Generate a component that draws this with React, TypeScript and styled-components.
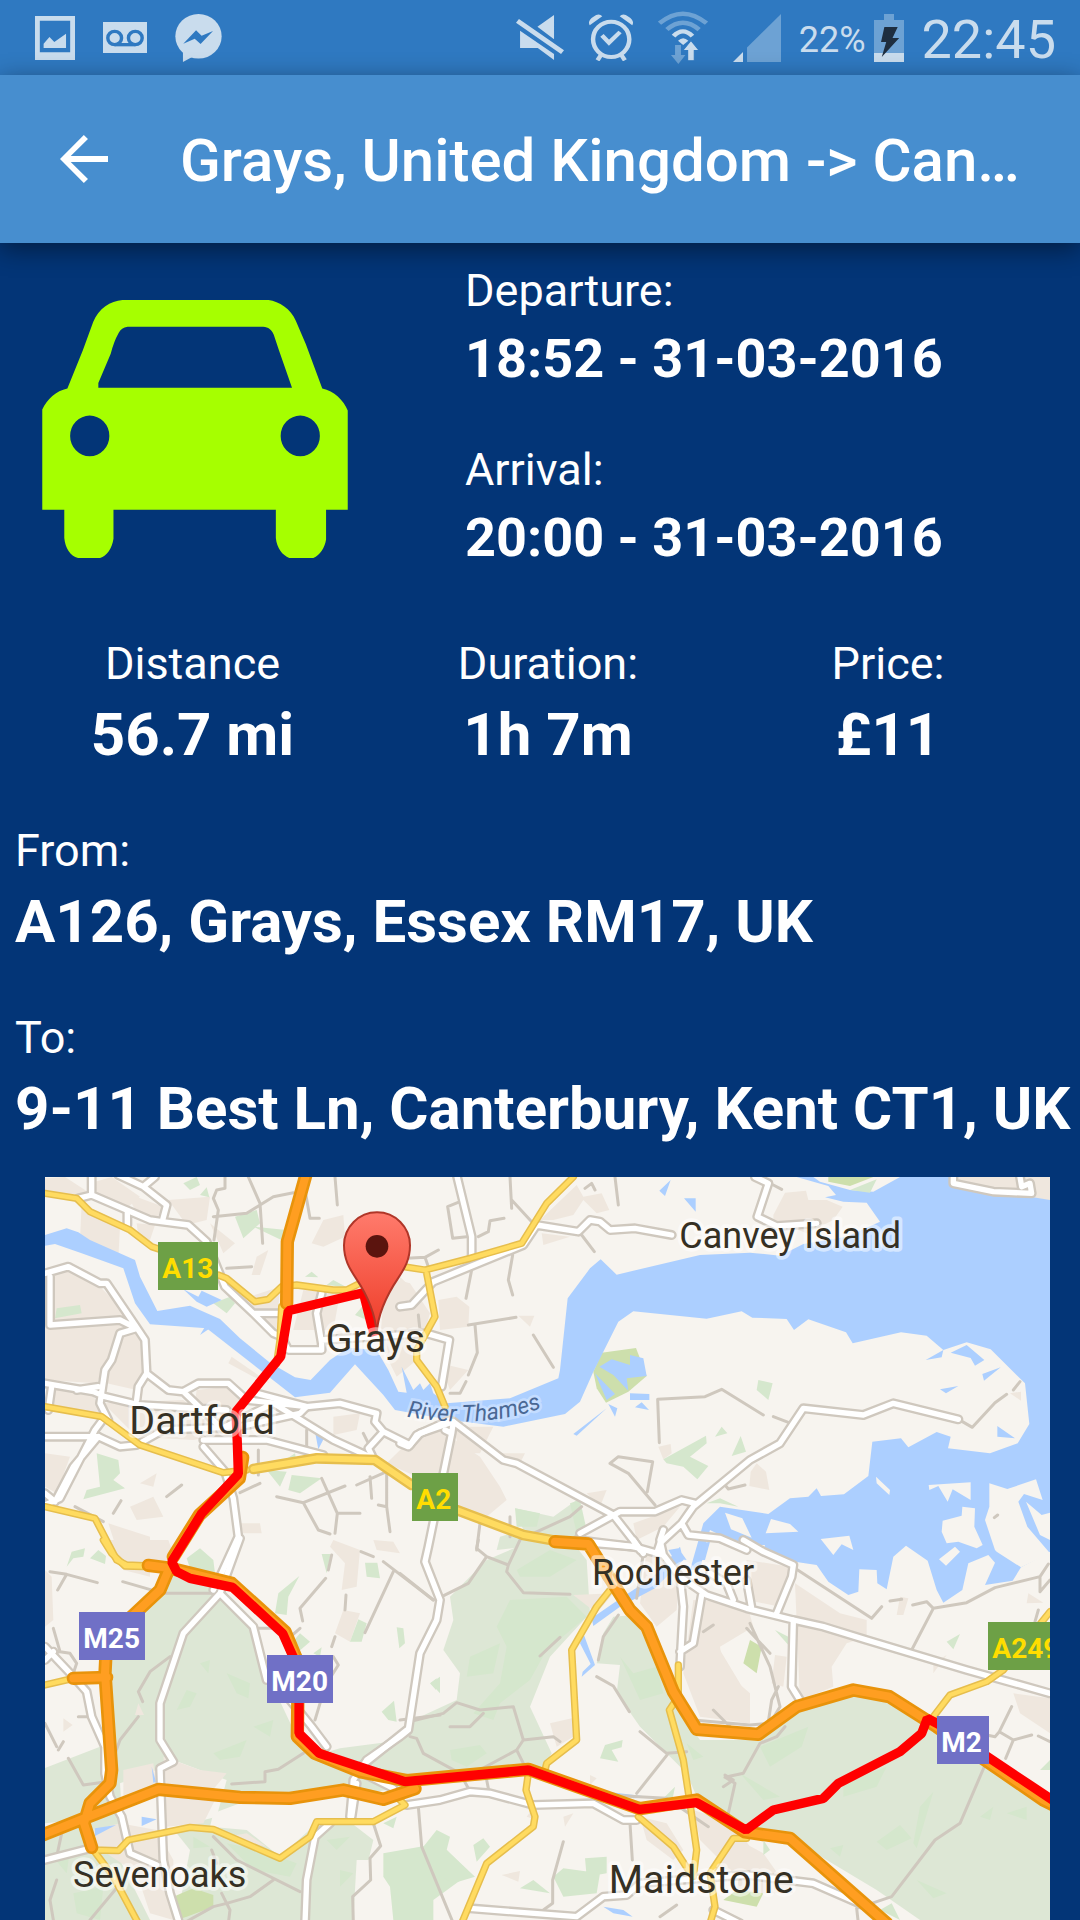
import React from "react";
import styled, { createGlobalStyle } from "styled-components";

const GlobalStyle = createGlobalStyle`
  * { box-sizing: border-box; }
  body { margin: 0; background: #033577; overflow-x: hidden; }
  dl, dd, dt, h1, p { margin: 0; font-weight: 400; }
`;

const Screen = styled.div`
  min-height: 100vh;
  display: flex;
  flex-direction: column;
  background: #033577;
  color: #fff;
  font-family: Roboto, "Noto Sans", sans-serif;
  overflow: hidden;
`;

/* ---------- status bar ---------- */

const StatusBar = styled.div`
  display: flex;
  justify-content: space-between;
  align-items: center;
  height: 75px;
  padding: 0 24px 0 35px;
  background: #2f79c1;
  color: #c9dced;
`;

const StatusGroup = styled.div<{ $gap: number }>`
  display: flex;
  align-items: center;
  gap: ${(p) => p.$gap}px;
`;

const Glyph = styled.svg<{ $w: number; $h: number }>`
  display: block;
  flex: none;
  width: ${(p) => p.$w}px;
  height: ${(p) => p.$h}px;
  fill: currentColor;
`;

const Percent = styled.span`
  font-size: 36px;
  line-height: 42px;
  padding-top: 4px;
`;

const Clock = styled.time`
  font-size: 54px;
  line-height: 64px;
  padding-top: 4px;
`;

const DIM = "#6da2d4";
const BAR = "#2f79c1";

/* ---------- app bar ---------- */

const AppBar = styled.header`
  display: flex;
  align-items: center;
  gap: 72px;
  height: 168px;
  padding: 0 60px;
  background: #478ecf;
  box-shadow: 0 6px 24px rgba(0, 0, 0, 0.45);
  position: relative;
`;

const BackButton = styled.button`
  display: block;
  flex: none;
  padding: 0;
  border: 0;
  background: none;
  color: #fff;
  cursor: pointer;
`;

const Title = styled.h1`
  flex: 1;
  min-width: 0;
  font-size: 60px;
  line-height: 70px;
  font-weight: 500;
  white-space: nowrap;
  overflow: hidden;
  text-overflow: ellipsis;
  padding-top: 4px;
`;

/* ---------- trip details ---------- */

const Details = styled.main`
  display: flex;
  flex-direction: column;
  gap: 54px;
  padding: 21px 15px 0;
`;

const Summary = styled.section`
  display: grid;
  grid-template-columns: 3fr 4fr;
`;

const CarCell = styled.div`
  padding: 36px 0 0 27px;
`;

const Times = styled.dl`
  display: flex;
  flex-direction: column;
  gap: 53px;
  padding-bottom: 14px;
`;

const Stats = styled.dl`
  display: grid;
  grid-template-columns: 355fr 356fr 324fr;
  padding-right: 15px;
  text-align: center;
`;

const Address = styled.dl`
  display: flex;
  flex-direction: column;
  gap: 54px;
`;

const Field = styled.div`
  display: flex;
  flex-direction: column;
  gap: 10px;
`;

const Label = styled.dt`
  font-size: 45px;
  line-height: 53px;
`;

const Value = styled.dd<{ $small?: boolean }>`
  font-size: ${(p) => (p.$small ? 54 : 60)}px;
  line-height: ${(p) => (p.$small ? 63 : 70)}px;
  font-weight: 700;
  white-space: nowrap;
`;

const MapFrame = styled.section`
  padding: 33px 30px 0 45px;
`;

const MapDrawing = styled.svg`
  display: block;
  width: 100%;
  height: auto;
  background: #f7f4ef;
  overflow: hidden;
`;

/* ---------- map data: each path is given on one of six sheets ---------- */

type Sheet = "a" | "b" | "c" | "d" | "e" | "f";
const SHEET: Record<Sheet, string> = {
  a: "translate(0 0)",
  b: "translate(1080 0)",
  c: "translate(2040 0)",
  d: "translate(0 1110)",
  e: "translate(1080 1110)",
  f: "translate(2040 1110)",
};
type Paths = [Sheet, string][];

const parkland: Paths = [
  ["d", "M385 100L540 150L640 270L690 420L770 590L850 640L900 625L1050 605L1120 540L1250 480L1260 400L1210 330L1240 240L1230 170L1340 60L1480 0L1600 10L1640 60L1650 220L1530 350L1470 500L1535 640L1500 700L1100 740L910 770L600 790L520 820L510 860L620 870L720 950L830 850L935 850L1000 900L940 1150L0 1150L0 900L120 840L15 850L0 690L180 620L215 660L180 400L200 300L360 150Z"],
  ["e", "M640 230L700 225L830 500L900 600L1075 600L1190 510L1360 460L1460 480L1950 800L1950 1250L1560 1140L1430 1050L1180 900L1040 860L890 770L860 700L720 560L650 460L660 375L590 370L610 280Z"],
  ["b", "M345 1015L460 1040L530 990L560 1110L290 1140L300 1100L370 1080Z"],
];

const landInPark: Paths = [
  ["d", "M240 730L350 690L400 660L560 720L530 830L370 870L250 890Z"],
  ["d", "M230 890L410 880L450 930L410 1140L330 1140L240 960Z"],
  ["d", "M950 960L1100 960L1100 1140L940 1140Z"],
];

const urban: Paths = [
  ["a", "M15 25L75 21L150 70L110 85L15 70Z M125 100L240 170L235 265L120 210Z M150 40L215 21L300 80L260 115L170 75Z M260 70L370 110L350 145L290 130Z"],
  ["a", "M15 300L90 290L180 350L240 410L280 460L210 560L170 640L15 630Z M250 450L310 500L320 600L290 660L200 640L220 520Z"],
  ["a", "M290 160L345 165L330 210L295 200Z M510 160L585 220L550 250Z M385 90L510 80L500 150L440 165Z M650 260L685 240L660 315L635 315Z"],
  ["a", "M600 390L720 350L710 480L640 440Z M790 360L900 370L880 480L760 480Z M850 150L910 135L915 200L850 230L815 220Z M1035 320L1110 340L1170 430L1130 570L1070 620L1020 520Z"],
  ["a", "M20 660L150 660L190 730L150 740L20 700Z M190 700L430 690L560 790L460 810L290 800Z M470 660L560 650L620 700L560 760L460 730Z M730 690L800 710L760 740Z M575 560L690 640L640 620L565 580Z"],
  ["a", "M15 850L90 860L50 970L15 950Z M270 1010L340 980L370 1040L290 1050Z M880 740L960 730L950 780L880 795Z M1090 830L1200 780L1320 860L1380 950L1400 990L1340 1040L1240 1000L1130 920L1040 880Z"],
  ["a", "M205 1060L330 1100L330 1220L250 1200Z M110 300L150 320L100 330Z M300 940L350 910L340 950Z M600 1060L660 1060L665 1090L610 1090Z"],
  ["b", "M0 320L50 370L20 400L0 400Z M115 390L170 380L208 410L205 470L120 480Z M355 437L403 437L390 470Z M420 150L530 45L550 80L605 70L628 120L590 130L550 90L520 135L460 150Z M425 190L510 200L430 225Z M120 580L205 600L150 660Z"],
  ["b", "M775 830L812 822L815 850L790 868Z M300 850L375 850L360 880L300 880Z M560 970L620 960L600 1010Z M700 1060L840 1010L790 1070L710 1110Z M160 770L280 770L240 850L180 850Z"],
  ["c", "M195 68L258 62L265 90L320 90L368 110L340 150L260 190L160 150L160 135Z M110 880L138 905L148 960L88 948L92 905Z M700 21L990 21L990 90L930 85L700 30Z M870 670L903 665L903 692Z"],
  ["d", "M190 0L385 0L410 70L385 80L300 70L240 60Z M15 90L35 110L40 240L15 260Z M880 0L960 30L950 140L905 150L915 70L870 20Z M1000 0L1060 5L1080 40L1010 30Z M910 210L960 220L930 305L885 280Z M70 535L98 555L70 575Z M295 490L312 525L285 525Z"],
  ["d", "M250 690L340 670L350 740L250 770Z M370 650L480 690L560 700L510 760L380 740Z M370 770L530 770L490 850L380 860Z M160 870L240 850L350 870L400 960L400 1140L330 1120L290 1000L170 920Z M560 890L620 880L680 920Z"],
  ["e", "M520 165L640 160L590 220Z M450 550L535 530L520 590L470 620Z M380 830L410 790L410 840Z M305 1005L360 993L355 1025Z M490 830L520 820L495 860Z M720 830L800 850L850 930L820 960L740 900Z M880 810L1000 850L1050 920L960 960L900 900Z M570 705L590 715L570 735Z"],
  ["e", "M740 30L840 60L830 210L770 260L720 190Z M880 180L1040 190L1060 260L960 320L970 390L1050 460L1050 550L900 530L850 400Z M1040 60L1170 80L1140 200L1040 180Z M1020 980L1160 1000L1180 1060L1010 1060Z"],
  ["f", "M225 130L360 220L440 240L440 290L380 310L335 380L340 440L240 480Z M165 345L200 350L190 440L155 430Z M0 330L90 480L80 550L0 530Z M880 460L990 475L990 580L900 520Z M540 170L565 175L550 225L530 225Z M925 160L970 188L920 190Z M0 870L130 940L180 1010L120 1030L0 980Z M640 370L680 345L640 400Z"],
];

const green: Paths = [
  ["a", "M430 40L470 21L480 45L450 60Z M480 75L500 52L508 82Z M585 140L650 120L660 160L610 205Z M640 170L740 180L735 215Z M50 415L120 405L125 430L45 445Z M795 320L815 305L835 322Z M860 345L880 330L920 352Z M945 435L975 400L980 450Z"],
  ["a", "M170 850L235 870L240 910L220 930L255 955L130 988L140 960L180 950Z M680 900L740 905L720 950Z M755 915L845 925L780 970L745 960Z M720 880L765 850L770 880Z M520 400L570 380L585 400L560 430Z"],
  ["b", "M790 868L918 797L920 820L870 860L925 888L892 928L850 890L800 880Z M945 800L965 770L982 790Z M995 858L1022 798L1038 845Z M920 1000L960 985L1015 1010L960 1000Z M510 1000L540 990L560 1080L530 1090Z M345 1015L420 1030L410 1070L350 1070Z"],
  ["c", "M115 630L158 640L145 690L110 660Z M390 60L470 28L450 68Z"],
  ["d", "M80 80L95 35L135 25L130 50L100 55Z M150 55L175 30L198 48L195 72Z M440 55L480 25L520 60L525 100L450 85Z M705 220L715 160L778 108L745 170L740 225Z M755 310L780 280L810 305L770 340Z M845 42L872 42L860 100Z M975 68L1012 68L1020 115L980 110Z M930 305L955 238L980 250L965 305Z M1070 262L1090 265L1095 310L1078 325Z"],
  ["d", "M1025 515L1062 482L1070 545L1045 540Z M1172 430L1200 410L1200 460Z M820 340L845 322L840 350Z M100 1060L190 1040L180 1140L110 1120Z M30 940L90 930L80 1000Z M560 910L660 930L770 970L750 1010L640 990Z M480 370L510 360L505 400Z M560 400L630 430L625 475L590 460Z M440 450L470 460L450 500L410 510Z"],
  ["d", "M1030 940L1200 910L1290 1000L1180 1080L1180 1140L1060 1140L1050 1040L1030 1010Z M520 640L620 600L600 650L540 660Z M640 560L700 540L690 590Z M860 900L930 890L890 930Z M1030 850L1070 830L1060 865Z M460 890L510 920L460 925Z M900 990L940 1000L900 1040Z"],
  ["e", "M350 90L450 30L530 60L450 110L360 110Z M330 180L500 170L560 230L440 330L390 420L300 490L280 540L220 520L300 430L320 320L290 260Z M210 350L300 310L280 400L200 410Z M600 655L615 615L668 600L665 622L635 630L655 665Z M150 630L240 615L260 640L200 680L155 660Z M220 915L250 895L270 920L230 965Z"],
  ["e", "M70 920L110 870L150 890L140 930L225 1010L160 1030L90 990Z M460 1010L490 985L600 1000L590 1060L490 1070Z M555 955L620 950L620 1000L560 1010Z M360 1045L400 1020L450 1060Z M790 775L825 740L815 790Z M660 350L700 400L770 380L790 460L720 480Z M90 430L110 415L108 450Z M860 610L910 650L880 660Z"],
  ["f", "M120 620L265 560L245 620L150 680Z M60 700L180 770L130 780Z M470 905L540 855L575 895L500 930Z M600 800L640 755L590 925L580 910Z M330 925L370 915L360 950Z M590 1020L680 1060L640 1075Z M370 730L500 680L470 740L370 770Z M165 270L205 290L205 315Z M680 305L720 282L700 328Z M780 830L820 800L810 840Z M860 820L920 800L920 840Z M480 1110L515 1090L540 1140Z M130 900L150 930L130 945Z M960 690L990 660L990 690Z"],
];

const brightGreen: Paths = [
  ["b", "M605 548L708 534L740 618L685 665L618 698L590 655L580 605Z"],
  ["d", "M400 1070L460 1045L520 1065L520 1100L440 1130L410 1140Z"],
  ["e", "M1050 300L1085 320L1070 400L1030 370Z M970 1080L1010 1050L1090 1060L1070 1100Z"],
];

const water: Paths = [
  ["a", "M15 195L80 175L115 187L150 210L285 270L300 320L352 423L450 407L540 447L600 505L690 578L765 622L812 630L870 570L925 533L1010 540L1045 600L1075 665L1100 668L1085 590L1120 660L1140 640L1150 660L1170 640L1180 670L1220 700L1410 685L1555 625L1560 600L1583 385L1650 295L1682 268L1730 314L1980 255L2130 248L2220 257L2290 222L2420 200L2520 155L2480 98L2410 95L2355 82L2388 75L2365 48L2270 21L3030 21L3030 1145L2943 1192L2918 1232L2835 1245L2865 1178L2845 1155L2785 1180L2767 1260L2710 1298L2690 1260L2663 1172L2598 1127L2560 1160L2540 1258L2512 1240L2510 1200L2458 1198L2455 1265L2425 1275L2365 1235L2330 1185L2265 1175L2140 1130L2040 1095L2010 1080L2000 1110L1980 1200L1950 1200L1990 1060L2040 1010L2185 1032L2250 985L2305 980L2330 955L2343 978L2412 973L2485 918L2497 815L2583 805L2605 832L2690 786L2732 800L2724 835L2850 850L2933 820L2968 762L2955 640L2852 538L2780 517L2710 540L2660 497L2583 487L2438 520L2418 487L2305 448L2262 480L2240 447L2137 443L2105 424L2000 446L1780 424L1735 455L1690 545L1660 605L1620 695L1575 732L1390 770L1230 750L1065 720L1030 675L945 583L870 668L765 682L500 475L330 463L285 400L250 295L125 250L45 222L15 227Z"],
  ["a", "M430 358L475 380L485 362L545 390L500 410L470 395Z M825 785L857 795L835 838Z M480 495L495 470L510 475Z"],
  ["b", "M778 62L812 30L795 78Z M852 85L887 85L887 125Z M598 590L635 568L690 585L690 555L730 565L740 618L680 625L685 662L640 615Z M585 610L645 672L620 690Z M690 670L748 672L748 690L690 690Z M705 712L725 697L747 720Z M520 792L620 715L530 797Z M625 702L652 715L645 740Z"],
  ["c", "M617 570L670 540L665 562Z M692 548L740 525L793 570L765 587L752 564Z M787 612L842 592L792 632Z M660 658L715 648L678 670Z M832 768L885 805L832 800Z"],
  ["d", "M165 865L228 855L165 888Z M305 830L350 838L305 858Z M335 680L348 725L340 728Z"],
  ["e", "M575 235L640 190L760 110L840 20L850 60L765 145L660 200L580 258Z M550 280L585 375L545 410L548 395L572 372L540 310Z M610 1100L670 1110L698 1130L640 1120Z M620 755L760 772L700 775Z M805 30L835 25L860 60L820 55Z M905 10L930 5L915 60L900 60Z"],
];

const islands: Paths = [
  ["c", "M808 940L862 957L948 928L968 990L912 972L895 995L922 1070L990 1150L903 1192L830 1145L825 1140L795 1050L808 1010Z M918 995L965 1035L990 1028L990 1110L960 1095Z M668 1052L725 1037L727 1010L765 1015L763 1070L788 1125L770 1135L715 1115L680 1120L665 1085Z M468 920L510 960L508 975L470 940Z M626 945L752 937L752 990L698 958L683 995L655 948L628 960Z"],
  ["c", "M15 1028L67 1045L95 1103L33 1078Z M153 1047L210 1062L235 1085L137 1090Z M302 1107L388 1097L400 1140L365 1123L340 1155Z M657 1168L705 1130L720 1145L678 1187Z M280 21L540 21L460 65L390 60L300 35Z M100 1125L135 1125L130 1145Z"],
];

const lanes: Paths = [
  ["a", "M555 21L555 55L530 60L520 85L535 120L522 210 M520 140L620 130L700 80L760 68 M625 21L660 100L668 220 M885 21L892 105 M795 60L810 145L838 145 M560 295L635 290 M1135 435L1140 480"],
  ["a", "M380 980L425 945 M220 1030L243 992 M105 1010L190 1055 M600 968L660 940 M655 840L655 915 M800 780L800 830 M970 790L990 830 M710 980L790 998L835 1080L870 1092 M790 998L915 948 M845 925L892 1030L960 1030 M892 1030L885 1090 M950 945L1040 905L1040 1010L1050 1085 M990 920L995 985 M1015 1005L1040 1010"],
  ["b", "M330 21L335 115 M335 90L395 155 M180 95L143 110L158 205L200 200 M235 200L265 185L270 152L312 145 M645 21L655 105 M555 55L575 40L585 60 M545 195L583 245 M338 255L325 330L338 375 M215 300L198 385 M205 465L348 442 M225 465L232 548L205 615 M198 635L180 670L150 670 M400 495L460 592"],
  ["b", "M20 265L75 262L115 240 M75 262L85 290 M778 818L773 688L915 680L965 658L1090 735 M1120 740L1165 757 M765 1005L685 910L630 880L655 860L758 875L742 965 M975 945L985 957L1035 945 M545 1010L510 1040L400 1090 M330 1040L330 1100 M240 1060L230 1140"],
  ["c", "M722 752L757 772L825 698L860 673 M880 660L900 635 M160 45L185 58 M823 1043L833 1035"],
  ["d", "M30 95L80 103L172 128 M80 103L53 150 M248 125L370 160L540 160 M40 265L60 335 M15 350L60 335L90 340L110 370L100 400 M875 45L865 90 M857 115L780 205L788 243 M780 265L740 300 M963 35L1000 50 M1030 65L1180 180 M1060 95L975 278 M918 165L915 210 M885 290L875 320"],
  ["d", "M390 350L330 395L295 455L308 485 M295 530L240 600L220 655 M575 732L675 725L675 695L715 688L790 640 M880 350L895 375L860 430L840 490L825 540 M115 530L150 530 M15 550L50 620 M55 630L70 605 M85 655L130 735L200 725 M65 880L50 950 M645 265L700 265L735 280"],
  ["d", "M520 890L590 960L780 1055 M700 1020L630 1070L560 1090L520 1100L430 1150 M545 1060L570 1110L565 1150 M515 930L530 970 M50 1020L30 1080L40 1140 M250 1020L150 1140 M1000 850L1022 918L990 955L992 1020L938 1070L940 1150 M1135 800L1145 920L1240 1150 M1080 540L1200 525"],
  ["e", "M235 0L230 25L260 50L325 75L360 0 M325 75L320 95L370 158L510 163 M125 170L205 130L260 50 M0 100L100 180 M655 225L610 290L595 360 M590 410L640 438L688 515 M420 348L480 292 M30 545L130 520L170 488L240 510L340 500L370 600L460 590L480 605 M150 560L210 560L250 520 M30 590L50 595L70 640L180 700L205 745 M370 600L350 630L230 695 M350 630L375 680 M260 720L265 745"],
  ["e", "M690 850L697 960 M490 905L458 1020L458 1090L430 1110 M720 575L800 640L860 635 M805 640L710 760 M620 765L800 775L925 860 M780 1130L830 1095 M940 510L1000 570 M880 540L1050 555L1110 550L1140 500L1110 380L1050 250 M1040 265L1110 340 M1105 545L1115 480L1135 440 M970 740L1000 720L975 705 M985 820L1005 730L975 712L1030 700L1080 610L1130 590L1155 560 M910 275L940 255 M710 175L730 40"],
  ["f", "M225 85L455 235L485 200 M510 183L545 178 M578 195L620 185L640 205L575 330 M640 205L740 188L825 143L960 110L985 72 M960 110L960 155L990 120 M955 210L945 245 M875 500L838 575L880 600L935 585 M838 575L825 590L800 585 M880 600L857 655 M955 588L990 605 M795 675L720 850L645 900L515 1070L410 1105L415 1150"],
];

const roads: Paths = [
  ["a", "M155 15L155 75L115 85 M155 75L330 150L365 155L445 165L500 215L555 350L640 430L735 430 M235 15L310 50L380 105L368 150 M310 50L345 21 M262 125L262 165 M640 430L700 490L725 500L745 540L845 540L845 510L1160 490L1228 510L1205 650 M845 370L830 430L845 520"],
  ["a", "M15 310L85 290L180 340L200 340L285 465L315 510L320 610L385 660L430 665L545 775L700 700L880 810L1000 865 M30 320L30 465L240 450L290 475L240 490L215 570L195 600L180 700L205 750 M15 640L160 665L195 680L300 705L560 720 M110 660L175 650 M430 665L475 640L565 640L620 690L800 710L780 730L600 770L370 780L290 825L240 830L175 800L15 800 M320 610L295 650L290 690"],
  ["a", "M195 740L165 780L60 985L15 1005 M175 800L100 890L45 995L15 970 M35 650L25 720 M800 710L900 700L1010 730L1005 755L1030 785L985 835L1000 865 M1030 785L1110 825L1130 795L1230 750 M490 810L680 810L850 855 M490 830L555 905L580 985L595 1100L540 1220L520 1260 M650 670L800 710"],
  ["b", "M170 15L215 200L215 255 M0 410L35 405L100 335L370 225L410 165L535 185L570 150L600 155L630 180L705 175L815 195 M160 755L155 790L135 780 M155 790L85 1130L75 1175L120 1290L110 1350L60 1450L25 1680L0 1700L-100 1770L-140 1830L-150 1940 M160 755L310 870L350 880L640 1035L730 1150"],
  ["b", "M540 1090L660 1025L765 1025L845 990L885 1000 M1050 870L880 1010L845 1060L780 1120L770 1150 M1050 870L1140 820L1210 715L1390 735L1480 700L1675 748 M845 1060L865 1095L960 1105L1040 1140 M580 1120L700 1130 M0 820L25 830L60 790L160 755"],
  ["c", "M105 21L145 40L112 140L170 168L290 160 M700 21L700 40L820 65L935 70L930 40L905 50L900 21"],
  ["d", "M600 -5L540 160L430 280L360 490L360 600L400 665L360 685L370 960L390 1060L415 1140 M540 160L640 260L680 420 M750 480L815 560L860 620 M15 320L100 410L140 455L155 530L195 620L195 700L210 770L245 830L270 940L350 975 M15 960L150 925 M15 360L40 335"],
  ["d", "M1100 795L1200 780L1290 755L1350 760L1480 795L1660 790L1750 840L1790 840 M1100 570L950 690L1060 745 M950 730L935 830 M870 850L825 890L800 1020L795 1150"],
  ["e", "M530 0L700 20L790 45L780 0L790 -30 M790 45L840 110L850 200L840 380 M840 110L920 165L1040 205L1180 240L1270 260L1400 300L1700 390L1950 460 M905 165L880 310L840 335 M1030 0L1090 35L1180 75L1175 110L1130 220 M1180 240L1175 440L1200 480 M1040 120L1055 205 M700 0L720 30"],
  ["e", "M210 1105L530 1130L610 1070L680 1065L720 1030L960 1010L1040 1005L1240 1030L1400 1100 M940 1110L1020 1150 M930 100L980 130L1000 180"],
];

const aRoads: Paths = [
  ["a", "M15 70L110 85L150 125L270 180L335 230L365 240 M535 315L560 325L645 395L685 388L725 350L770 345L880 360L920 360L960 340 M1090 290L1155 300L1290 265L1445 220L1520 100L1600 21 M1160 310L1185 440L1130 540L1130 570L1190 650L1215 710"],
  ["a", "M15 710L185 740L300 825L550 908L620 900 M15 1010L165 1045L230 1170L260 1185L330 1188"],
  ["a", "M725 410L720 510L710 580"],
  ["d", "M190 0L215 40L255 78L310 80 M15 435L100 415 M160 930L235 932L265 900L450 862L520 868L720 955L810 890L830 845L1000 845L1095 795L1070 770 M160 930L220 1010L295 1150"],
  ["e", "M630 150L590 200L515 330L530 600L440 670L435 690 M385 700L378 750L405 830L400 860L260 970L185 1150 M715 830L820 920L865 990 M835 375L835 470L808 510L850 660L870 790L890 930L880 1010 M1040 895L1000 895L930 1000L945 1100L930 1150"],
  ["f", "M990 215L850 390L800 425L690 465L640 530"],
];

const wideARoads: Paths = [
  ["a", "M640 897L830 865L1005 870L1115 945"],
  ["b", "M170 1020L370 1095L470 1113"],
];

const trunk: Paths = [
  ["a", "M799 10L742 215L740 400 M608 862L598 925L478 1035L400 1160"],
  ["d", "M325 76L388 84L575 130L735 275L775 370L772 590L825 640L960 695L1100 722L1465 688L1800 806L1970 780L2115 876L2250 895L2540 1150"],
  ["d", "M388 84L360 150L200 300L195 400L215 690L210 730L150 790L132 850L155 922 M100 415L200 412 M0 888L120 840L355 748L600 772L750 775L910 750L1030 778L1125 746"],
  ["e", "M465 5L565 12L690 210L740 260L820 455L890 568L1075 583L1190 500L1360 450L1468 470L1610 560L1930 780L1960 795"],
];

const ROUTE =
  "M1003 498L970 368L745 422L722 560L588 725L592 820L595 912L485 1030L395 1175L410 1205L450 1225L578 1252L728 1390L777 1500L777 1690L838 1750L1095 1835L1465 1800L1798 1918L1970 1898L2118 1980L2200 1920L2350 1885L2395 1840L2580 1745L2645 1690L2662 1645L2700 1665L3040 1892";

const LARGE = 118;
const SMALL = 108;
const towns = [
  { name: "Grays", x: 857, y: 545, size: LARGE },
  { name: "Dartford", x: 268, y: 793, size: LARGE },
  { name: "Canvey Island", x: 1918, y: 235, size: SMALL },
  { name: "Rochester", x: 1656, y: 1245, size: SMALL },
  { name: "Sevenoaks", x: 99, y: 2150, size: SMALL },
  { name: "Maidstone", x: 1706, y: 2170, size: LARGE },
];

const shields = [
  { name: "A13", x: 354, y: 216, w: 180 },
  { name: "A2", x: 1116, y: 909, w: 138 },
  { name: "A249", x: 2844, y: 1356, w: 222 },
  { name: "M25", x: 117, y: 1326, w: 198 },
  { name: "M20", x: 681, y: 1455, w: 198 },
  { name: "M2", x: 2691, y: 1638, w: 156 },
];

const Area = ({ paths, fill }: { paths: Paths; fill: string }) => (
  <g fill={fill}>
    {paths.map(([sheet, d], i) => (
      <path key={i} d={d} transform={SHEET[sheet]} />
    ))}
  </g>
);

const Lines = ({ paths, color, width }: { paths: Paths; color: string; width: number }) => (
  <g fill="none" stroke={color} strokeWidth={width} strokeLinejoin="round" strokeLinecap="round">
    {paths.map(([sheet, d], i) => (
      <path key={i} d={d} transform={SHEET[sheet]} />
    ))}
  </g>
);

const RouteMap = () => (
  <MapDrawing viewBox="15 21 3015 2229" role="img" aria-label="Route map">
    <defs>
      <linearGradient id="pin" x1="0" y1="0" x2="0" y2="1">
        <stop offset="0" stopColor="#ff7b6c" />
        <stop offset="1" stopColor="#ee3c28" />
      </linearGradient>
      <path id="thames" d="M1100 740Q1330 780 1510 712" />
    </defs>
    <Area paths={parkland} fill="#dde7d5" />
    <Area paths={landInPark} fill="#f7f4ef" />
    <Area paths={urban} fill="#efe7de" />
    <Area paths={green} fill="#d5e7cd" />
    <Area paths={brightGreen} fill="#cddfac" />
    <Area paths={water} fill="#accfff" />
    <Area paths={islands} fill="#f7f4ef" />
    <g transform={SHEET.c}>
      <path d="M325 21L460 21L390 48L325 35Z" fill="#cddfac" />
      <path d="M390 60L470 28L450 68Z" fill="#d5e7cd" />
      <path d="M700 15L990 15L990 90L930 80L700 35Z" fill="#efe7de" />
    </g>
    <Lines paths={lanes} color="#cfc8be" width={9} />
    <Lines paths={roads} color="#cfc8be" width={30} />
    <Lines paths={roads} color="#ffffff" width={16} />
    <Lines paths={aRoads} color="#e6be4d" width={22} />
    <Lines paths={wideARoads} color="#e6be4d" width={32} />
    <Lines paths={aRoads} color="#ffdb60" width={13} />
    <Lines paths={wideARoads} color="#ffdb60" width={18} />
    <Lines paths={trunk} color="#e8930b" width={40} />
    <Lines paths={trunk} color="#ff9e21" width={24} />
    <path d={ROUTE} fill="none" stroke="#ff0000" strokeWidth={28} strokeLinejoin="bevel" />
    <path
      d="M1010 490C1006 430 985 380 948 325C928 295 912 268 912 226A99 99 0 0 1 1110 226C1110 268 1094 295 1074 325C1037 380 1014 430 1010 490Z"
      fill="url(#pin)"
      stroke="#b03628"
      strokeWidth={6}
    />
    <circle cx="1011" cy="229" r="34" fill="#5b140e" />
    <g
      fontFamily="Roboto, sans-serif"
      fill="#353024"
      stroke="#ffffff"
      strokeOpacity={0.5}
      strokeWidth={22}
      strokeLinejoin="round"
      paintOrder="stroke"
    >
      {towns.map((t) => (
        <text key={t.name} x={t.x} y={t.y} fontSize={t.size}>
          {t.name}
        </text>
      ))}
    </g>
    <text
      fontFamily="Roboto, sans-serif"
      fontStyle="italic"
      fontSize={70}
      fill="#4a6894"
      stroke="#ffffff"
      strokeOpacity={0.3}
      strokeWidth={16}
      paintOrder="stroke"
    >
      <textPath href="#thames">River Thames</textPath>
    </text>
    {shields.map((s) => (
      <g key={s.name}>
        <rect
          x={s.x}
          y={s.y}
          width={s.w}
          height={144}
          fill={s.name[0] === "M" ? "#7070c6" : "#6da046"}
        />
        <text
          x={s.x + 13}
          y={s.y + 108}
          fontFamily="Roboto, sans-serif"
          fontWeight={700}
          fontSize={84}
          fill={s.name[0] === "M" ? "#ffffff" : "#ffdd00"}
        >
          {s.name}
        </text>
      </g>
    ))}
  </MapDrawing>
);

/* ---------- status icons ---------- */

const ScreenshotIcon = () => (
  <Glyph $w={40} $h={44} viewBox="102 48 116 132" preserveAspectRatio="none">
    <path fillRule="evenodd" d="M102 48H218V180H102ZM116 62V157H204V62Z" />
    <path d="M127 144V131L144 111L158 126L192 101V144Z" />
  </Glyph>
);

const VoicemailIcon = () => (
  <Glyph $w={44} $h={31} viewBox="305 66 128 93" preserveAspectRatio="none">
    <path d="M305 66H433V159H305Z" />
    <g fill="none" stroke={BAR} strokeWidth="10">
      <circle cx="339" cy="114" r="20" />
      <circle cx="399" cy="114" r="20" />
      <path d="M339 134H399" />
    </g>
  </Glyph>
);

const MessengerIcon = () => (
  <Glyph $w={47} $h={48} viewBox="509 45 136 142" preserveAspectRatio="none">
    <ellipse cx="577" cy="111" rx="67" ry="66" />
    <path d="M532 150V187L556 174L575 165Z" />
    <path fill={BAR} d="M533 133L570 93L586 109L619 95L583 134L566 118Z" />
  </Glyph>
);

const MuteIcon = () => (
  <Glyph $w={48} $h={45} viewBox="35 45 130 135" preserveAspectRatio="none">
    <path d="M138 45V118L93 80ZM46 92L138 162V180L94 144H46ZM43 57L165 151L157 162L35 68Z" />
  </Glyph>
);

const AlarmIcon = () => (
  <Glyph $w={44} $h={47} viewBox="235 42 119 141" preserveAspectRatio="none">
    <g fill="none" stroke="currentColor" strokeWidth="12">
      <ellipse cx="295" cy="118" rx="49" ry="53" />
      <path d="M270 106L289 128L319 96" />
      <path d="M267 166L258 181M323 166L332 181" />
    </g>
    <path d="M237 76Q230 62 247 50Q262 38 271 49ZM352 76Q359 62 342 50Q327 38 318 49Z" />
  </Glyph>
);

const WifiIcon = () => (
  <Glyph $w={50} $h={53} viewBox="430 29 135 160" preserveAspectRatio="none">
    <g fill="none" strokeWidth="13">
      <path stroke={DIM} d="M434 66Q497 8 561 66M454 85Q497 44 541 85" />
      <path stroke="currentColor" d="M472 105Q497 76 523 105" />
    </g>
    <path d="M484 119Q498 103 512 119L498 132Z" />
    <path fill={DIM} d="M476 132H492V162H504L485 189L465 162H476Z" />
    <path stroke={BAR} strokeWidth="3" d="M510 179V148H497L519 118L541 148H528V179Z" />
  </Glyph>
);

const SignalIcon = () => (
  <Glyph $w={48} $h={48} viewBox="627 38 130 145" preserveAspectRatio="none">
    <path fill={DIM} d="M757 38V183H665V139Z" />
    <path d="M654 153V183H627Z" />
  </Glyph>
);

const BatteryIcon = () => (
  <Glyph $w={30} $h={48} viewBox="1008 36 81 144" preserveAspectRatio="none">
    <path fill={DIM} d="M1035 36H1062V54H1089V180H1008V54H1035Z" />
    <path d="M1008 153H1089V180H1008Z" />
    <path fill="#1e2e40" d="M1036 75H1072L1058 108H1076L1029 165L1041 120H1027Z" />
  </Glyph>
);

const ArrowBack = () => (
  <Glyph $w={48} $h={48} viewBox="175 405 139 144" preserveAspectRatio="none" aria-hidden="true">
    <path d="M175 477L244 405L256 417L206 468H314V486H206L256 537L244 549Z" />
  </Glyph>
);

const CarIcon = () => (
  <Glyph $w={306} $h={258} viewBox="122 144 888 750" role="img" aria-label="Car">
    <path
      fill="#a6ff00"
      fillRule="evenodd"
      d="M355 144H780C810 148 845 170 859 204L888 272L936 401C970 408 998 435 1010 465V754H947V840C943 865 930 885 910 894H840C820 886 804 866 801 836V754H329V838C325 866 310 888 290 894H226C203 888 189 866 186 836V754H122V462C136 432 162 408 195 401L240 290L270 208C286 168 320 147 355 144ZM370 222C357 224 350 230 344 240Q330 265 321 300L285 385V399H848L810 290L795 245C788 230 780 223 764 222ZM260 480A57 59 0 1 0 260 598A57 59 0 1 0 260 480ZM872 480A57 59 0 1 0 872 598A57 59 0 1 0 872 480Z"
    />
  </Glyph>
);

const times = [
  ["Departure:", "18:52 - 31-03-2016"],
  ["Arrival:", "20:00 - 31-03-2016"],
];
const stats = [
  ["Distance", "56.7 mi"],
  ["Duration:", "1h 7m"],
  ["Price:", "£11"],
];
const places = [
  ["From:", "A126, Grays, Essex RM17, UK"],
  ["To:", "9-11 Best Ln, Canterbury, Kent CT1, UK"],
];

export default function App() {
  return (
    <Screen>
      <GlobalStyle />
      <StatusBar>
        <StatusGroup $gap={28}>
          <ScreenshotIcon />
          <VoicemailIcon />
          <MessengerIcon />
        </StatusGroup>
        <StatusGroup $gap={25}>
          <MuteIcon />
          <AlarmIcon />
          <WifiIcon />
          <StatusGroup $gap={18}>
            <SignalIcon />
            <StatusGroup $gap={8}>
              <Percent>22%</Percent>
              <BatteryIcon />
            </StatusGroup>
            <Clock>22:45</Clock>
          </StatusGroup>
        </StatusGroup>
      </StatusBar>
      <AppBar>
        <BackButton type="button" aria-label="Back">
          <ArrowBack />
        </BackButton>
        <Title>Grays, United Kingdom -&gt; Canterbury, United Kingdom</Title>
      </AppBar>
      <Details>
        <Summary>
          <CarCell>
            <CarIcon />
          </CarCell>
          <Times>
            {times.map(([label, value]) => (
              <Field key={label}>
                <Label>{label}</Label>
                <Value $small>{value}</Value>
              </Field>
            ))}
          </Times>
        </Summary>
        <Stats>
          {stats.map(([label, value]) => (
            <Field key={label}>
              <Label>{label}</Label>
              <Value>{value}</Value>
            </Field>
          ))}
        </Stats>
        <Address>
          {places.map(([label, value]) => (
            <Field key={label}>
              <Label>{label}</Label>
              <Value>{value}</Value>
            </Field>
          ))}
        </Address>
      </Details>
      <MapFrame>
        <RouteMap />
      </MapFrame>
    </Screen>
  );
}
